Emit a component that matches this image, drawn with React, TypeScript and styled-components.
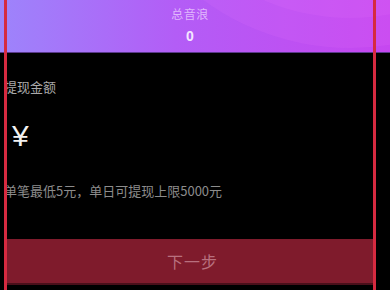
import React from 'react';
import styled, { createGlobalStyle } from 'styled-components';

const GlobalStyle = createGlobalStyle`
  html, body {
    margin: 0;
    padding: 0;
    background: #000;
  }
  body {
    font-family: "Noto Sans CJK SC", "Noto Sans", sans-serif;
  }
`;

const Page = styled.div`
  position: relative;
  width: 390px;
  height: 290px;
  overflow: hidden;
  background: #000;
  display: flex;
  flex-direction: column;
`;

const Header = styled.div`
  position: relative;
  height: 52px;
  flex-shrink: 0;
  overflow: hidden;
  padding-right: 10px;
  background: linear-gradient(90deg, #9d84fb 0%, #b35df6 45%, #c647f0 100%);
  display: flex;
  flex-direction: column;
  align-items: center;
  box-shadow: 0 1px 0 #5a3a8a;
`;

const Ring = styled.div<{ size: number; top: number; right: number }>`
  position: absolute;
  width: ${p => p.size}px;
  height: ${p => p.size}px;
  top: ${p => p.top}px;
  right: ${p => p.right}px;
  border-radius: 50%;
  background: rgba(240, 120, 255, 0.12);
`;

const HeaderLabel = styled.div`
  position: relative;
  margin-top: 5px;
  font-size: 12px;
  line-height: 18px;
  color: rgba(240, 215, 255, 0.75);
  letter-spacing: 0.5px;
`;

const HeaderValue = styled.div`
  position: relative;
  margin-top: 4px;
  font-family: "Liberation Sans", Arial, sans-serif;
  font-weight: bold;
  font-size: 14px;
  line-height: 18px;
  color: #f4e6ff;
`;

const Body = styled.div`
  flex: 1;
  display: flex;
  flex-direction: column;
  padding-left: 4px;
`;

const Label = styled.div`
  margin-top: 26px;
  font-size: 13px;
  line-height: 18px;
  color: #a9a9a9;
`;

const Amount = styled.div`
  margin-top: 23px;
  padding-left: 8px;
  font-family: "Liberation Sans", Arial, sans-serif;
  font-size: 30px;
  line-height: 34px;
  color: #f2f2f2;
`;

const Hint = styled.div`
  margin-top: 29px;
  font-size: 13px;
  line-height: 18px;
  color: #8c8c8c;
`;

const NextButton = styled.button`
  margin-top: 39px;
  width: 371px;
  height: 46px;
  border: none;
  border-bottom: 2px solid #4a0f1a;
  background: #7f1b2c;
  color: #b8707e;
  font-family: "Noto Sans CJK SC", "Noto Sans", sans-serif;
  font-size: 16px;
  letter-spacing: 1px;
  padding: 0 0 0 6px;
  text-align: center;
`;

const Frame = styled.div`
  position: absolute;
  left: 4px;
  top: -10px;
  width: 366px;
  height: 298px;
  border: 3px solid #d62a40;
  pointer-events: none;
`;

export default function App() {
  return (
    <>
      <GlobalStyle />
      <Page>
        <Header>
          <Ring size={496} top={-448} right={-208} />
          <Ring size={436} top={-418} right={-178} />
          <HeaderLabel>总音浪</HeaderLabel>
          <HeaderValue>0</HeaderValue>
        </Header>
        <Body>
          <Label>提现金额</Label>
          <Amount>¥</Amount>
          <Hint>单笔最低5元，单日可提现上限5000元</Hint>
          <NextButton>下一步</NextButton>
        </Body>
        <Frame />
      </Page>
    </>
  );
}
